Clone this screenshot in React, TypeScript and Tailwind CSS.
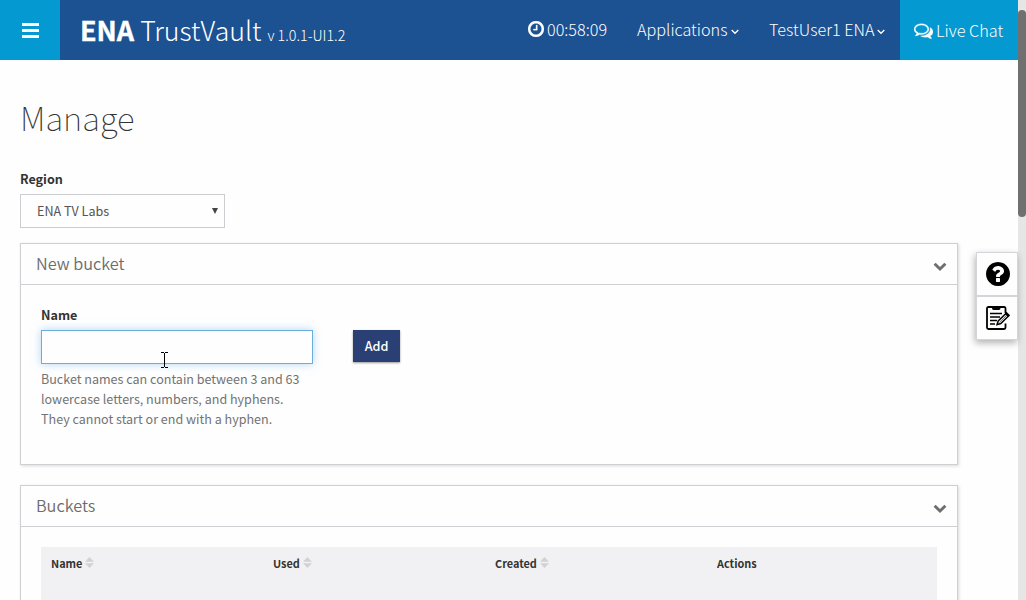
import type { ReactNode } from "react";

function ClockIcon() {
  return (
    <svg viewBox="128 128 1536 1536" className="mt-[1px] h-4 w-4" fill="currentColor" stroke="currentColor" strokeWidth="30">
      <path d="M1024 544v448q0 14-9 23t-23 9h-320q-14 0-23-9t-9-23v-64q0-14 9-23t23-9h224v-352q0-14 9-23t23-9h64q14 0 23 9t9 23zm416 352q0-148-73-273t-198-198-273-73-273 73-198 198-73 273 73 273 198 198 273 73 273-73 198-198 73-273zm224 0q0 209-103 385.500t-279.500 279.500-385.500 103-385.500-103-279.500-279.500-103-385.500 103-385.500 279.500-279.500 385.500-103 385.500 103 279.500 279.500 103 385.500z" />
    </svg>
  );
}

function CommentsIcon() {
  return (
    <svg viewBox="0 0 1792 1792" className="h-[19px] w-[19px]" fill="currentColor" stroke="currentColor" strokeWidth="30">
      <path d="M704 384q-153 0-286 52t-211.500 141-78.500 191q0 82 53 158t149 132l97 56-35 84q34-20 62-39l44-31 53 10q78 14 153 14 153 0 286-52t211.500-141 78.500-191-78.500-191-211.500-141-286-52zm0-128q191 0 353.500 68.500t256.500 186.500 94 257-94 257-256.500 186.500-353.500 68.500q-86 0-176-16-124 88-278 128-36 9-86 16h-3q-11 0-20.500-8t-11.500-21q-1-3-1-6.500t.5-6.500 2-6l2.500-5 3.500-5.500 4-5 4.500-5 4-4.500q5-6 23-25t26-29.500 22.500-29 25-38.500 20.500-44q-124-72-195-177t-71-224q0-139 94-257t256.500-186.500 353.500-68.500zm822 1169q10 24 20.500 44t25 38.500 22.500 29 26 29.500 23 25q1 1 4 4.500t4.500 5 4 5 3.500 5.500l2.500 5 2 6 .5 6.500-1 6.500q-3 14-13 22t-22 7q-50-7-86-16-154-40-278-128-90 16-176 16-271 0-472-132 58 4 88 4 161 0 309-45t264-129q125-92 192-212t67-254q0-77-23-152 129 71 204 178t75 230q0 120-71 224.500t-195 176.500z" />
    </svg>
  );
}

function AngleDown() {
  return (
    <svg viewBox="0 0 8 6" className="mt-[7px] h-[6px] w-2" fill="none" stroke="currentColor" strokeWidth="1.3">
      <path d="M0.700 1 L4 4.300 L7.300 1" />
    </svg>
  );
}

function ChevronDown() {
  return (
    <svg viewBox="0 0 14 10" className="mt-[5px] h-[10px] w-[14px]" fill="none" stroke="#6f6f6f" strokeWidth="3">
      <path d="M1.600 1.700 L7 7 L12.400 1.700" />
    </svg>
  );
}

function QuestionIcon() {
  return (
    <svg viewBox="128 128 1536 1536" className="h-6 w-6" fill="#000">
      <path d="M1024 1376v-192q0-14-9-23t-23-9h-192q-14 0-23 9t-9 23v192q0 14 9 23t23 9h192q14 0 23-9t9-23zm256-672q0-88-55.500-163t-138.500-116-170-41q-243 0-371 213-15 24 8 42l132 100q7 6 19 6 16 0 25-12 53-68 86-92 34-24 86-24 48 0 85.500 26t37.500 59q0 38-20 61t-68 45q-63 28-115.500 86.500t-52.500 125.500v36q0 14 9 23t23 9h192q14 0 23-9t9-23q0-19 21.500-49.500t54.500-49.500q32-18 49-28.500t46-35 44.500-48 28-60.500 12.500-81zm384 192q0 209-103 385.500t-279.500 279.500-385.500 103-385.500-103-279.500-279.500-103-385.500 103-385.500 279.500-279.500 385.500-103 385.500 103 279.500 279.500 103 385.500z" />
    </svg>
  );
}

function NoteIcon() {
  return (
    <svg viewBox="0 0 24 24" className="h-6 w-6" fill="none" stroke="#000">
      <path d="M19.500 7V2.500Q19.500 1 18 1H2.500Q1 1 1 2.500V21.500Q1 23 2.500 23H18Q19.500 23 19.500 21.500V17.500" strokeWidth="1.800" />
      <path d="M6 0h8.500v2q0 2-1.500 2h-5.500Q6 4 6 2z" fill="#000" stroke="none" />
      <path d="M4 7.500h12M4 11h10M4 14.500h7M4 18h5" strokeWidth="1.400" />
      <path d="M11 18.700l1.200-3.700L20.500 7l2.500 2.500-8.200 8z" fill="#fff" strokeWidth="1.500" />
      <path d="M20.500 6l3.400 3.300-1.900 1.900-3.300-3.300z" fill="#000" stroke="none" />
      <path d="M13.500 16.300l6.500-6.300" strokeWidth="0.600" />
    </svg>
  );
}

function SortIcon() {
  return (
    <svg viewBox="0 0 9 11" className="mb-[1px] h-[11px] w-[9px]" fill="#d2d2d2">
      <path d="M0 4.700L4.500 0L9 4.700zM0 6.300h9L4.500 11z" />
    </svg>
  );
}

function Panel({ title, className, children }: { title: string; className: string; children: ReactNode }) {
  return (
    <section className={`w-[938px] border border-[#cfd0d3] bg-[#fefefe] shadow-[1px_1px_3px_rgba(0,0,0,0.15)] ${className}`}>
      <header className="flex h-[41px] items-center justify-between border-b border-[#cfd0d3] pr-[10px] pl-[15px]">
        <h2 className="mb-[2px] text-[16.300px] leading-6 font-[350] text-[#6c6c6c]">{title}</h2>
        <ChevronDown />
      </header>
      {children}
    </section>
  );
}

const columns = [
  { label: "Name", sortable: true },
  { label: "Used", sortable: true },
  { label: "Created", sortable: true },
  { label: "Actions", sortable: false },
];

export default function App() {
  return (
    <div className="relative flex h-[600px] w-[1026px] overflow-hidden bg-[#fefefe] font-['Noto_Sans_CJK_SC',sans-serif] text-[12.600px] text-[#333]">
      <div className="flex w-[1018px] shrink-0 flex-col">
        <header className="flex h-[60px] shrink-0 bg-[#1c5192] text-white">
          <button className="flex w-[60px] flex-col items-center justify-center gap-[3px] bg-[#0499d0]" aria-label="Menu">
            <span className="h-[3px] w-[17px] bg-white" />
            <span className="h-[3px] w-[17px] bg-white" />
            <span className="h-[3px] w-[17px] bg-white" />
          </button>
          <div className="flex w-[468px] items-baseline pt-[12px] pl-[20px] leading-9 whitespace-nowrap">
            <span className="text-[27px] font-bold [-webkit-text-stroke:0.4px_white]">ENA</span>
            <span className="ml-[6px] text-[26.700px] font-light">TrustVault</span>
            <span className="ml-[6px] text-[14.300px] font-light">v 1.0.1-UI1.2</span>
          </div>
          <nav className="flex flex-1 items-center pb-[2px] text-[16.200px] font-light whitespace-nowrap">
            <div className="flex w-[109px] items-center gap-[3px]">
              <ClockIcon />
              <span>00:58:09</span>
            </div>
            <div className="flex w-[132px] items-center gap-[3px]">
              <span>Applications</span>
              <AngleDown />
            </div>
            <div className="flex items-center gap-[3px]">
              <span>TestUser1 ENA</span>
              <AngleDown />
            </div>
          </nav>
          <div className="flex w-[118px] items-center gap-[3px] bg-[#0499d0] pl-[14px] text-[16.300px] font-light whitespace-nowrap">
            <CommentsIcon />
            <span>Live Chat</span>
          </div>
        </header>

        <main className="flex flex-col pl-[20px]">
          <h1 className="mt-[33px] h-[48px] text-[33px] leading-[48px] font-thin whitespace-nowrap">Manage</h1>
          <label className="mt-[28px] h-5 leading-5 font-bold">Region</label>
          <div className="mt-[5px] flex h-[34px] w-[205px] items-center justify-between border border-[#cccdd0] pr-[6px] pl-4 text-[#555]">
            <span>ENA TV Labs</span>
            <svg viewBox="0 0 6 6" className="h-[6px] w-[6px]" fill="#444">
              <path d="M0 0h6L3 6z" />
            </svg>
          </div>

          <Panel title="New bucket" className="mt-[15px] h-[222px]">
            <div className="flex pt-5 pl-5">
              <div className="flex w-[272px] flex-col">
                <label className="h-5 leading-5 font-bold">Name</label>
                <input className="mt-[5px] h-[34px] w-[272px] border border-[#6aaede] bg-[#fefefe] shadow-[0_0_8px_rgba(102,175,233,0.5)] outline-none" aria-label="Bucket name" />
                <p className="mt-[5px] text-[12.550px] leading-5 whitespace-nowrap text-[#737373]">
                  Bucket names can contain between 3 and 63
                  <br />
                  lowercase letters, numbers, and hyphens.
                  <br />
                  They cannot start or end with a hyphen.
                </p>
              </div>
              <button className="mt-[25px] ml-[40px] h-[32px] w-[47px] bg-[#2a4075] font-medium text-white shadow-[0_1px_2px_rgba(0,0,0,0.4)]">
                Add
              </button>
            </div>
          </Panel>

          <Panel title="Buckets" className="mt-5 h-[222px]">
            <div className="mt-5 ml-5 grid h-[160px] w-[896px] grid-cols-[222px_222px_222px_230px] bg-[#f1f1f4] pt-[6px] pl-[10px] text-[10.900px] font-bold">
              {columns.map((column) => (
                <div key={column.label} className="flex h-5 items-center gap-[3px]">
                  <span>{column.label}</span>
                  {column.sortable && <SortIcon />}
                </div>
              ))}
            </div>
          </Panel>
        </main>
      </div>

      <div className="flex w-2 shrink-0 flex-col bg-[#e6e6e6] pt-[10px]">
        <div className="h-[207px] rounded-[4px] bg-[#707070]" />
      </div>

      <aside className="absolute top-[252px] left-[976px] flex h-[88px] w-[42px] flex-col border border-[#d3d5d9] bg-[#fefefe] shadow-[-1px_3px_7px_rgba(0,0,0,0.3)]">
        <div className="flex h-[44px] items-center justify-center border-b-2 border-[#d3d5d9] pl-[2px]">
          <QuestionIcon />
        </div>
        <div className="flex flex-1 items-center justify-center pl-[2px]">
          <NoteIcon />
        </div>
      </aside>

      <svg viewBox="0 0 7 16" className="absolute top-[352px] left-[161px] h-4 w-[7px]" fill="none" stroke="#000">
        <path d="M0 .5h3M4 .5h3M3.500 1v14M0 15.500h3M4 15.500h3" />
      </svg>
    </div>
  );
}
